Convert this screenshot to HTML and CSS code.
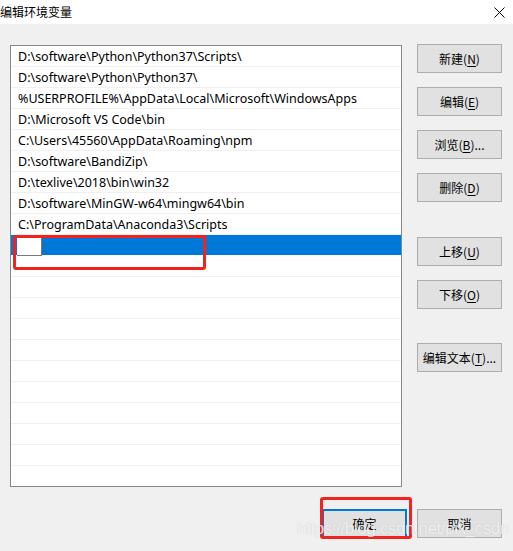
FILE: index.html
```html
<!DOCTYPE html>
<html lang="zh">
<head>
<meta charset="utf-8">
<title>编辑环境变量</title>
<link rel="stylesheet" href="styles.css">
</head>
<body>
<div class="window">
  <div class="titlebar">
    <span class="title">编辑环境变量</span>
    <svg class="close" width="11" height="11" viewBox="0 0 11 11"><path d="M0.5 0.5 L10.5 10.5 M10.5 0.5 L0.5 10.5" stroke="#000" stroke-width="1" fill="none"/></svg>
  </div>
  <div class="content">
    <div class="list">
      <div class="row">D:\software\Python\Python37\Scripts\</div>
      <div class="row">D:\software\Python\Python37\</div>
      <div class="row">%USERPROFILE%\AppData\Local\Microsoft\WindowsApps</div>
      <div class="row">D:\Microsoft VS Code\bin</div>
      <div class="row">C:\Users\45560\AppData\Roaming\npm</div>
      <div class="row">D:\software\BandiZip\</div>
      <div class="row">D:\texlive\2018\bin\win32</div>
      <div class="row">D:\software\MinGW-w64\mingw64\bin</div>
      <div class="row">C:\ProgramData\Anaconda3\Scripts</div>
      <div class="row selected"><span class="editbox"></span></div>
      <div class="row"></div>
      <div class="row"></div>
      <div class="row"></div>
      <div class="row"></div>
      <div class="row"></div>
      <div class="row"></div>
      <div class="row"></div>
      <div class="row"></div>
      <div class="row"></div>
      <div class="row"></div>
      <div class="row last"></div>
    </div>
    <div class="buttons">
      <button class="btn">新建(<u>N</u>)</button>
      <button class="btn">编辑(<u>E</u>)</button>
      <button class="btn">浏览(<u>B</u>)...</button>
      <button class="btn">删除(<u>D</u>)</button>
      <button class="btn gap">上移(<u>U</u>)</button>
      <button class="btn">下移(<u>O</u>)</button>
      <button class="btn gap2">编辑文本(<u>T</u>)...</button>
    </div>
  </div>
  <div class="footer">
    <button class="btn default">确定</button>
    <button class="btn">取消</button>
  </div>
  <div class="mark mark-row"></div>
  <div class="mark mark-ok"></div>
  <div class="watermark">https://blog.csdn.net/pix_csdn</div>
</div>
</body>
</html>
```
FILE: styles.css
```css
* { box-sizing: border-box; }
html, body {
  margin: 0;
  padding: 0;
  width: 513px;
  height: 551px;
  overflow: hidden;
  background: #f0f0f0;
}
.window {
  position: relative;
  width: 513px;
  height: 551px;
  font-family: "Noto Sans", "Noto Sans CJK SC", sans-serif;
  font-size: 12px;
  color: #000;
}
.titlebar {
  height: 24px;
  background: #fff;
  display: flex;
  align-items: center;
  justify-content: space-between;
  padding: 0 8px 1px 0;
}
.title {
  font-family: "Noto Sans CJK SC", sans-serif;
  font-size: 12px;
  line-height: 14px;
}
.close { display: block; margin-top: 1px; }
.content {
  display: flex;
  padding: 21px 11px 0 10px;
  gap: 15px;
}
.list {
  width: 392px;
  height: 442px;
  border: 1px solid #828790;
  background: #fff;
  display: flex;
  flex-direction: column;
}
.row {
  height: 21px;
  flex: none;
  border-bottom: 1px solid #f0f0f0;
  padding: 1px 0 0 7px;
  line-height: 20px;
  white-space: nowrap;
  font-family: "Noto Sans", "Noto Sans CJK SC", sans-serif;
  font-size: 12.5px;
}
.row.last { height: 20px; border-bottom: 0; }
.row.selected {
  background: #0078d7;
  padding-left: 6px;
  padding-top: 1px;
  border-bottom-color: #fff;
}
.editbox {
  display: block;
  width: 25px;
  height: 20px;
  background: #fff;
  border-right: 1px solid #7a7a7a;
  border-bottom: 1px solid #7a7a7a;
}
.buttons {
  display: flex;
  flex-direction: column;
  gap: 14px;
  margin-top: -1px;
}
.btn {
  width: 85px;
  height: 29px;
  background: #e1e1e1;
  border: 1px solid #adadad;
  font-family: "Noto Sans CJK SC", sans-serif;
  font-size: 12px;
  color: #000;
  padding: 0;
  margin: 0;
  line-height: 27px;
  text-align: center;
}
.btn u { text-underline-offset: 2px; }
.btn.gap { margin-top: 21px; }
.btn.gap2 { margin-top: 20px; }
.btn.default { border-color: #0078d7; border-width: 2px; line-height: 25px; }
.footer {
  display: flex;
  justify-content: flex-end;
  gap: 10px;
  padding: 22px 11px 0 0;
}
.mark {
  position: absolute;
  border: 3px solid #f2221d;
  border-radius: 3px;
}
.mark-row { left: 13px; top: 235px; width: 193px; height: 35px; }
.mark-ok { left: 320px; top: 497px; width: 92px; height: 42px; }
.watermark {
  position: absolute;
  left: 297px;
  top: 519px;
  font-family: "Liberation Sans", sans-serif;
  font-size: 17px;
  color: rgba(255, 255, 255, 0.75);
  text-shadow: 0 0 1px rgba(150, 150, 150, 0.5);
  white-space: nowrap;
  letter-spacing: -0.4px;
}
```
